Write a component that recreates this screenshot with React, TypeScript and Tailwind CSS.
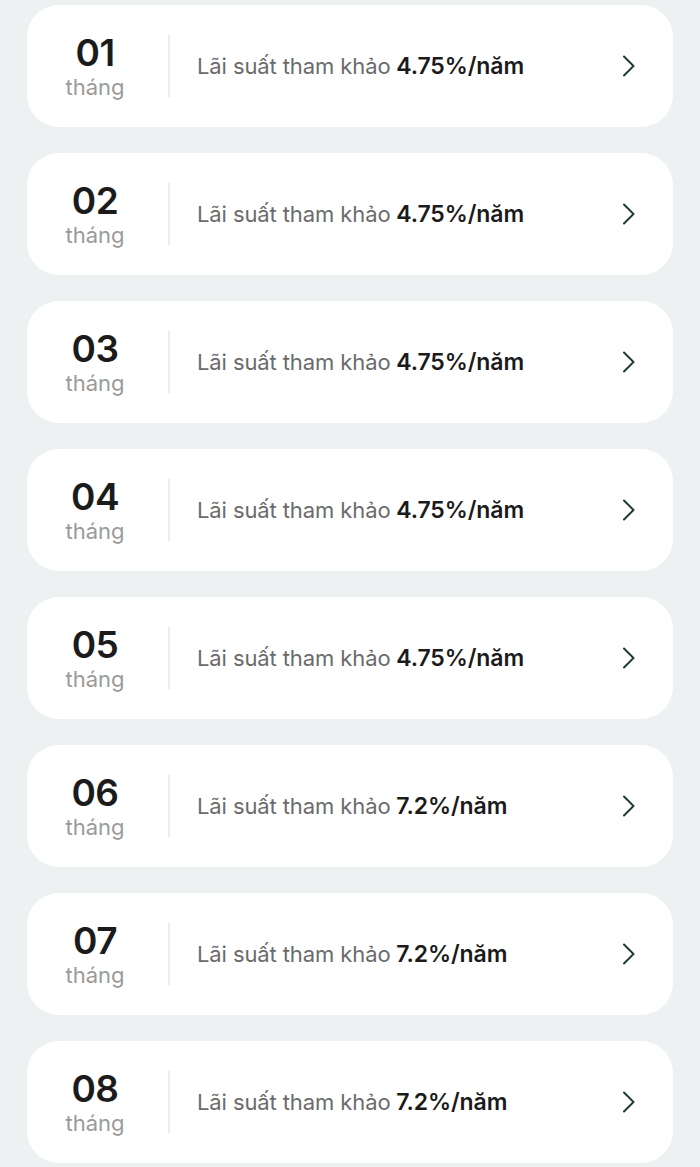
const rows = [
  { m: '01', rate: '4.75%' },
  { m: '02', rate: '4.75%' },
  { m: '03', rate: '4.75%' },
  { m: '04', rate: '4.75%' },
  { m: '05', rate: '4.75%' },
  { m: '06', rate: '7.2%' },
  { m: '07', rate: '7.2%' },
  { m: '08', rate: '7.2%' },
];

function Chevron() {
  return (
    <svg width="14" height="22" viewBox="0 0 14 22" fill="none" className="mr-[37px] shrink-0">
      <path d="M2 1.5 L11.5 11 L2 20.5" stroke="#1e3b2c" strokeWidth="2" strokeLinecap="round" strokeLinejoin="round" />
    </svg>
  );
}

export default function App() {
  return (
    <div
      className="min-h-[1167px] bg-[#eef1f2] px-[27px] pt-[5px] flex flex-col gap-[26px]"
      style={{ fontFamily: '"Inter", "Noto Sans", sans-serif' }}
    >
      {rows.map((r) => (
        <div
          key={r.m}
          className="h-[122px] shrink-0 rounded-[32px] bg-white flex items-center"
        >
          <div className="w-[134px] ml-[1px] flex flex-col items-center pt-[3px]">
            <span className="text-[37px] leading-[38px] font-semibold text-[#1b1b1b] tracking-[-0.5px]">
              {r.m}
            </span>
            <span className="text-[22px] leading-[30px] text-[#9a9a9a]">tháng</span>
          </div>
          <div className="ml-[6px] w-[2px] h-[62px] bg-[#ececec]" />
          <div className="ml-[27px] flex-1 text-[22px] tracking-[-0.1px]">
            <span className="text-[#6b6b6b]">Lãi suất tham khảo</span>
            <span className="font-semibold text-[#1b1b1b] text-[23px]"> {r.rate}/năm</span>
          </div>
          <Chevron />
        </div>
      ))}
    </div>
  );
}
